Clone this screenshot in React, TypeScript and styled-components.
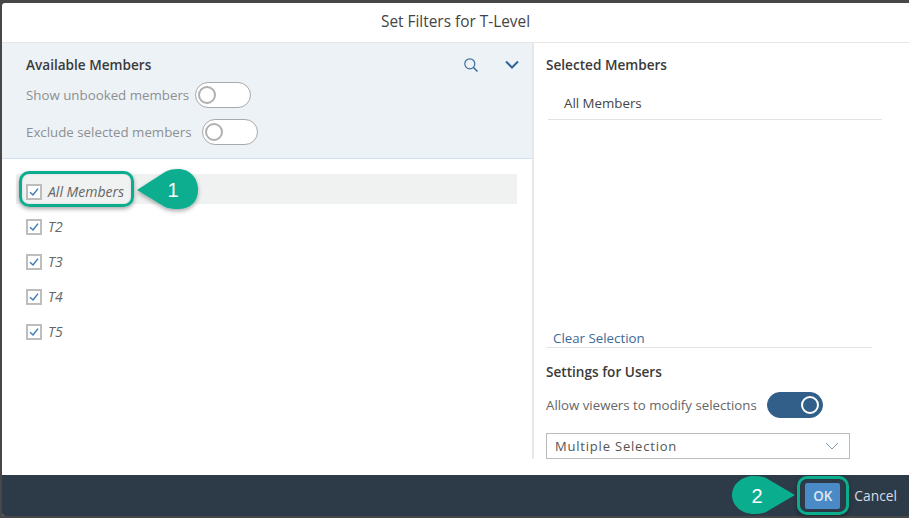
import React from 'react';
import styled, { createGlobalStyle } from 'styled-components';

const Global = createGlobalStyle`
  html, body {
    margin: 0;
    padding: 0;
    height: 518px;
    overflow: hidden;
    background: #474747;
  }
  body {
    font-family: "Open Sans", "Noto Sans", sans-serif;
  }
`;

const Page = styled.div`
  position: relative;
  width: 909px;
  height: 518px;
  padding: 3px 0 2px 2px;
  box-sizing: border-box;
`;

const Dialog = styled.div`
  display: flex;
  flex-direction: column;
  height: 100%;
  background: #fff;
  border-radius: 3px 0 0 3px;
  overflow: hidden;
`;

const Header = styled.div`
  height: 40px;
  flex: none;
  box-sizing: border-box;
  display: flex;
  align-items: center;
  justify-content: center;
  border-bottom: 1px solid #e5e5e5;
  font-size: 15.4px;
  color: #444;
  padding-bottom: 2px;
`;

const Body = styled.div`
  flex: 1;
  display: flex;
  min-height: 0;
`;

const LeftColumn = styled.div`
  width: 530px;
  flex: none;
  display: flex;
  flex-direction: column;
`;

const FilterPanel = styled.div`
  height: 116px;
  box-sizing: border-box;
  flex: none;
  background: #edf2f7;
  border-bottom: 1px solid #cfe0f0;
  padding: 13px 12px 0 24px;
`;

const PanelTitleRow = styled.div`
  display: flex;
  align-items: center;
  justify-content: space-between;
  height: 18px;
  margin-bottom: 8px;
`;

const SectionTitle = styled.div`
  font-size: 13.6px;
  font-weight: 600;
  color: #3a3a3a;
  line-height: 18px;
`;

const IconRow = styled.div`
  display: flex;
  align-items: center;
  gap: 25px;
`;

const OptionRow = styled.div<{ $gap: number }>`
  display: flex;
  align-items: center;
  height: 26px;
  margin-bottom: 11px;
  gap: ${p => p.$gap}px;
`;

const MutedLabel = styled.span`
  font-size: 13.3px;
  color: #8d8f91;
`;

const Track = styled.div<{ $on?: boolean }>`
  position: relative;
  width: 56px;
  height: 26px;
  box-sizing: border-box;
  border-radius: 13px;
  background: ${p => (p.$on ? '#325f8a' : '#fff')};
  border: 1px solid ${p => (p.$on ? '#325f8a' : '#a9a9a9')};
`;

const Knob = styled.div<{ $on?: boolean }>`
  position: absolute;
  top: 3px;
  ${p => (p.$on ? 'right: 3px;' : 'left: 2px;')}
  width: 18px;
  height: 18px;
  box-sizing: border-box;
  border-radius: 50%;
  background: ${p => (p.$on ? '#325f8a' : '#fff')};
  border: 2.5px solid ${p => (p.$on ? '#fff' : '#b0b0b0')};
`;

const MemberList = styled.div`
  padding: 15px 15px 0 14px;
  display: flex;
  flex-direction: column;
`;

const MemberRow = styled.div<{ $active?: boolean }>`
  height: 30px;
  box-sizing: border-box;
  margin-bottom: 5px;
  padding: 6px 0 0 10px;
  display: flex;
  align-items: center;
  gap: 6px;
  background: ${p => (p.$active ? '#f0f1f1' : 'transparent')};
`;

const CheckBox = styled.div`
  width: 16px;
  height: 16px;
  box-sizing: border-box;
  border: 2px solid #bdbdbd;
  background: #fff;
  display: flex;
  align-items: center;
  justify-content: center;
`;

const MemberName = styled.span`
  font-size: 14px;
  font-style: italic;
  color: #666;
  margin-bottom: 2px;
`;

const RightColumn = styled.div`
  flex: 1;
  height: 416px;
  box-sizing: border-box;
  border-left: 2px solid #e8e8e8;
  padding: 13px 0 0 12px;
  display: flex;
  flex-direction: column;
`;

const SelectedItem = styled.div`
  width: 334px;
  height: 43px;
  margin: 3px 0 0 2px;
  box-sizing: border-box;
  border-bottom: 1px solid #e2e2e2;
  padding: 7px 0 0 16px;
  font-size: 13.3px;
  line-height: 38px;
  color: #444;
  white-space: nowrap;
`;

const ClearLink = styled.div`
  width: 326px;
  margin-top: auto;
  box-sizing: border-box;
  border-bottom: 1px solid #e2e2e2;
  padding-left: 7px;
  font-size: 13.3px;
  line-height: 18px;
  height: 19px;
  color: #3a6a99;
`;

const SettingsBlock = styled.div`
  margin-top: 15px;
`;

const ViewerRow = styled.div`
  display: flex;
  align-items: center;
  gap: 10px;
  height: 26px;
  margin-top: 11px;
`;

const ViewerLabel = styled.span`
  font-size: 13.25px;
  color: #666;
`;

const Select = styled.div`
  width: 304px;
  height: 26px;
  margin-top: 15px;
  box-sizing: border-box;
  border: 1px solid #bcbcbc;
  display: flex;
  align-items: center;
  justify-content: space-between;
  padding: 0 10px 0 8px;
  font-size: 13px;
  letter-spacing: 0.8px;
  color: #555;
`;

const Footer = styled.div`
  height: 41px;
  flex: none;
  background: #2d3a47;
  display: flex;
  align-items: center;
  justify-content: flex-end;
  padding-right: 12px;
  gap: 14px;
`;

const OkButton = styled.div`
  width: 35px;
  height: 26px;
  background: #4a8ac7;
  border-radius: 2px;
  display: flex;
  align-items: center;
  justify-content: center;
  font-size: 13.4px;
  font-weight: 600;
  color: #dfe9f3;
`;

const CancelText = styled.span`
  font-size: 13.8px;
  color: #d5dde5;
`;

const Highlight = styled.div<{ $left: number; $top: number; $w: number; $h: number }>`
  position: absolute;
  left: ${p => p.$left}px;
  top: ${p => p.$top}px;
  width: ${p => p.$w}px;
  height: ${p => p.$h}px;
  box-sizing: border-box;
  border: 3px solid #0aae8f;
  border-radius: 10px;
  box-shadow: 0 2px 4px rgba(0, 0, 0, 0.35), inset 0 0 2px rgba(0, 0, 0, 0.15);
`;

const Callout = styled.svg<{ $left: number; $top: number }>`
  position: absolute;
  left: ${p => p.$left}px;
  top: ${p => p.$top}px;
  overflow: visible;
`;

const CalloutNumber = styled.div<{ $left: number; $top: number }>`
  position: absolute;
  left: ${p => p.$left}px;
  top: ${p => p.$top}px;
  width: 24px;
  text-align: center;
  font-family: "Liberation Sans", Arial, sans-serif;
  font-size: 20px;
  line-height: 24px;
  color: #fff;
`;

const Tick = () => (
  <svg width="12" height="12" viewBox="0 0 12 12">
    <path d="M2 6.2 L5 9 L10 2.6" fill="none" stroke="#3f7cbb" strokeWidth="1.5" />
  </svg>
);

const Toggle = ({ on }: { on?: boolean }) => (
  <Track $on={on}>
    <Knob $on={on} />
  </Track>
);

const members = ['All Members', 'T2', 'T3', 'T4', 'T5'];

export default function App() {
  return (
    <Page>
      <Global />
      <Dialog>
        <Header>Set Filters for T-Level</Header>
        <Body>
          <LeftColumn>
            <FilterPanel>
              <PanelTitleRow>
                <SectionTitle>Available Members</SectionTitle>
                <IconRow>
                  <svg width="16" height="16" viewBox="0 0 16 16">
                    <circle cx="6.8" cy="6.8" r="5" fill="none" stroke="#3f6f9c" strokeWidth="1.2" />
                    <path d="M10.5 10.5 L14.5 14.5" stroke="#3f6f9c" strokeWidth="1.6" />
                  </svg>
                  <svg width="16" height="10" viewBox="0 0 16 10">
                    <path d="M2 1.5 L8 7.5 L14 1.5" fill="none" stroke="#2f6496" strokeWidth="2" />
                  </svg>
                </IconRow>
              </PanelTitleRow>
              <OptionRow $gap={6}>
                <MutedLabel>Show unbooked members</MutedLabel>
                <Toggle />
              </OptionRow>
              <OptionRow $gap={10}>
                <MutedLabel>Exclude selected members</MutedLabel>
                <Toggle />
              </OptionRow>
            </FilterPanel>
            <MemberList>
              {members.map((name, i) => (
                <MemberRow key={name} $active={i === 0}>
                  <CheckBox>
                    <Tick />
                  </CheckBox>
                  <MemberName>{name}</MemberName>
                </MemberRow>
              ))}
            </MemberList>
          </LeftColumn>
          <RightColumn>
            <SectionTitle>Selected Members</SectionTitle>
            <SelectedItem>All Members</SelectedItem>
            <ClearLink>Clear Selection</ClearLink>
            <SettingsBlock>
              <SectionTitle>Settings for Users</SectionTitle>
              <ViewerRow>
                <ViewerLabel>Allow viewers to modify selections</ViewerLabel>
                <Toggle on />
              </ViewerRow>
              <Select>
                Multiple Selection
                <svg width="14" height="8" viewBox="0 0 14 8">
                  <path d="M1 1 L7 7 L13 1" fill="none" stroke="#7f9ab3" strokeWidth="1" />
                </svg>
              </Select>
            </SettingsBlock>
          </RightColumn>
        </Body>
        <Footer>
          <OkButton>OK</OkButton>
          <CancelText>Cancel</CancelText>
        </Footer>
      </Dialog>

      <Highlight $left={19} $top={171} $w={115} $h={36} />
      <Callout $left={134} $top={169} width="66" height="42" viewBox="0 0 66 42">
        <defs>
          <filter id="callout-shadow" x="-20%" y="-20%" width="140%" height="150%">
            <feDropShadow dx="0" dy="2" stdDeviation="2" floodColor="#000" floodOpacity="0.35" />
          </filter>
        </defs>
        <path
          d="M3 21 L31 3 Q36 0 44 0 C56 0 64 9 64 21 C64 33 56 40 44 40 Q36 40 31 38 Z"
          fill="#0aae8f"
          filter="url(#callout-shadow)"
        />
      </Callout>
      <CalloutNumber $left={161} $top={178}>1</CalloutNumber>

      <Highlight $left={797} $top={476} $w={52} $h={39} />
      <Callout $left={732} $top={475} width="66" height="40" viewBox="0 0 66 40">
        <path
          d="M63 20 L34 37 Q30 39 22 39 C10 39 0 31 0 20 C0 9 10 1 22 1 Q30 1 34 3 Z"
          fill="#0aae8f"
        />
      </Callout>
      <CalloutNumber $left={745} $top={484}>2</CalloutNumber>
    </Page>
  );
}
